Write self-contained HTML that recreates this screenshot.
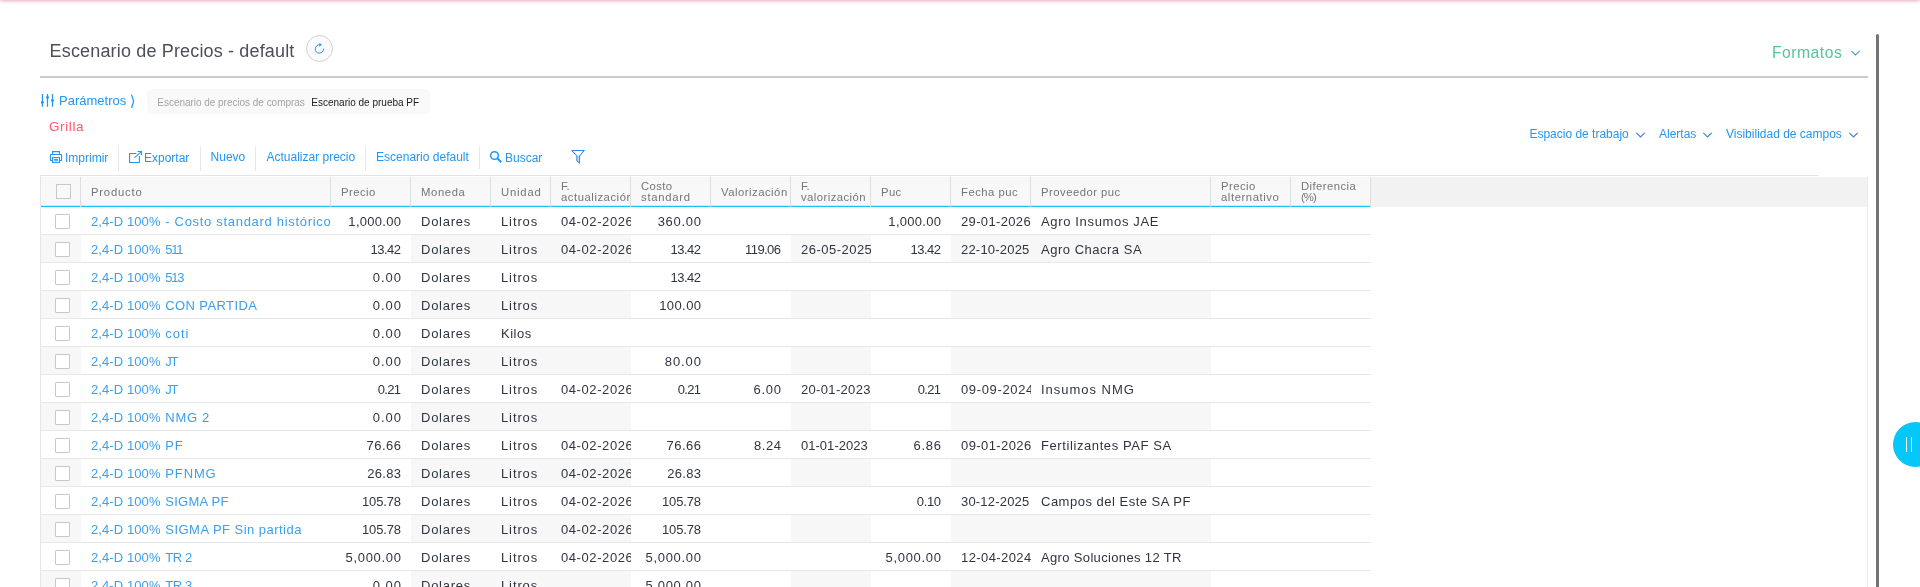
<!DOCTYPE html>
<html lang="es">
<head>
<meta charset="utf-8">
<title>Escenario de Precios - default</title>
<style>
html,body{margin:0;padding:0;background:#fff;}
body{width:1920px;height:587px;overflow:hidden;position:relative;font-family:"Liberation Sans",sans-serif;color:#333;}
#app{position:absolute;left:0;top:0;width:1920px;height:587px;overflow:hidden;will-change:transform;}
.abs{position:absolute;}
.topband{position:absolute;left:1px;top:-6px;width:1918px;height:5px;background:#fff;box-shadow:0 0 4px 1px rgba(205,50,100,.62);}
.title{position:absolute;left:49.6px;top:39px;font-family:"Liberation Sans",sans-serif;font-size:18px;line-height:24px;color:#4b5058;letter-spacing:.16px;white-space:nowrap;}
.rbtn{position:absolute;left:306px;top:35px;width:25px;height:25px;border:1px solid #cdd0d5;border-radius:50%;background:#fafafa;}
.hr{position:absolute;left:40px;top:76px;width:1828px;height:2px;background:#c9ccd1;}
.formatos{position:absolute;left:1772px;top:43px;font-size:15.7px;line-height:20px;color:#52c69a;letter-spacing:.5px;white-space:nowrap;}
.param{position:absolute;left:59px;top:93px;font-size:13px;line-height:15px;color:#2196f3;white-space:nowrap;}
.chip{position:absolute;left:147px;top:89px;width:283px;height:25px;border-radius:5px;background:#f9f9fa;}
.chip .l{position:absolute;left:10.3px;top:8px;letter-spacing:-.03px;font-size:10px;line-height:12px;color:#a3a3a3;white-space:nowrap;}
.chip .v{position:absolute;left:164.3px;top:8px;font-size:10px;line-height:12px;color:#1b1b1b;white-space:nowrap;}
.grilla{position:absolute;left:49px;top:119px;font-size:13.5px;line-height:16px;color:#f75c6c;letter-spacing:.6px;white-space:nowrap;}
.tb{position:absolute;font-size:12px;line-height:14px;color:#2196f3;white-space:nowrap;}
.sep{position:absolute;width:1px;background:#e8e8ea;top:146px;height:25px;}
.tline{position:absolute;left:40px;top:175px;width:1778px;height:1px;background:#e4e4e4;}
.rt{position:absolute;top:127px;font-size:12px;line-height:14px;color:#2196f3;white-space:nowrap;}
.vbar{position:absolute;left:1876px;top:34px;width:3px;height:560px;background:#727476;border-radius:2px 2px 0 0;}
.fab{position:absolute;left:1893px;top:422px;width:45px;height:45px;border-radius:50%;background:#06c8f8;}
.fab i{position:absolute;top:15px;width:1px;height:15px;background:#fff;}
/* grid */
.grid{position:absolute;left:0;top:0;width:1920px;height:587px;font-family:"Liberation Sans",sans-serif;}
.gl{position:absolute;left:40px;top:176px;width:1px;height:420px;background:#e6e6e6;}
.gr{position:absolute;left:1867px;top:176px;width:1px;height:420px;background:#ececec;}
.hrow{position:absolute;left:0;top:177px;width:1868px;height:30px;}
.hc{position:absolute;top:0;height:30px;background:linear-gradient(#f8f8f8 0,#f8f8f8 28px,transparent 28px);font-size:11.3px;color:#71767c;letter-spacing:.6px;overflow:hidden;white-space:nowrap;}
.hc::after{content:"";position:absolute;right:0;top:0;width:1px;height:30px;background:#dedee1;}
.hline{position:absolute;left:41px;top:28px;width:1330px;height:2px;background:linear-gradient(#c3eefc 0,#c3eefc 50%,#12c5f7 50%,#12c5f7 100%);}
.hc span{position:absolute;left:10px;top:9px;line-height:13px;}
.hc b{display:block;font-weight:normal;}
.hc.two span{top:4px;line-height:11px;}
.hfill{position:absolute;left:1371px;top:0;width:496px;height:30px;background:#f2f2f2;}
.cb{position:absolute;width:13px;height:13px;border:1px solid #c6c8cc;background:#fff;border-radius:1px;}
.hc .cb{background:#f9f9f9;border-radius:0;}
.hc .cb{top:7px;left:15px;}
.c .cb{top:7px;left:14px;}
.pf{display:inline-block;width:74.3px;white-space:pre;}
.row{position:absolute;left:0;width:1371px;height:28px;}
.row::after{content:"";position:absolute;left:41px;top:27px;width:1330px;height:1px;background:#e7e7e7;}
.c{position:absolute;top:0;height:27px;line-height:29px;font-size:13px;letter-spacing:.5px;color:#2f3540;padding:0 10px;box-sizing:border-box;overflow:hidden;white-space:nowrap;}
.c.sh{background:#f7f7f7;}
.c.num{text-align:right;padding-right:10px;}
.c.lk a{color:#3d9fe9;}
</style>
</head>
<body>
<div id="app">
<div class="topband"></div>
<div class="title">Escenario de Precios - default</div>
<div class="rbtn"></div>
<svg class="abs" style="left:313px;top:42px" width="13" height="13" viewBox="0 0 13 13"><path d="M10.7 7A4.2 4.2 0 1 1 6.5 2.7" fill="none" stroke="#2196f3" stroke-width="1" stroke-linecap="round"/><path d="M6.3 0.9L9.1 2.75L6.3 4.6Z" fill="#2196f3"/></svg>
<div class="formatos">Formatos</div>
<svg class="abs" style="left:1850px;top:49.4px" width="11" height="8" viewBox="0 0 11 8"><path d="M1.3 1.8L5.5 6L9.7 1.8" fill="none" stroke="#4f92e2" stroke-width="1.1"/></svg>
<div class="hr"></div>

<svg class="abs" style="left:40px;top:93px" width="15" height="15" viewBox="0 0 15 15"><g stroke="#2196f3" stroke-width="1.25" fill="none"><path d="M2.4 1.1V13.8M7.5 1.1V13.8M12.5 1.1V13.8"/></g><g fill="#2196f3"><circle cx="2.4" cy="9.5" r="1.45"/><circle cx="7.5" cy="4.4" r="1.45"/><circle cx="12.5" cy="7.4" r="1.45"/></g></svg>
<div class="param">Parámetros <span style="font-family:'DejaVu Sans',sans-serif;font-size:15px;line-height:10px;position:relative;top:1px">⟩</span></div>
<div class="chip"><span class="l">Escenario de precios de compras</span><span class="v">Escenario de prueba PF</span></div>
<div class="grilla">Grilla</div>

<div class="rt" style="left:1529.4px">Espacio de trabajo</div>
<svg class="abs" style="left:1635px;top:130.5px" width="11" height="8" viewBox="0 0 11 8"><path d="M1.3 1.8L5.5 6L9.7 1.8" fill="none" stroke="#3d84d4" stroke-width="1.15"/></svg>
<div class="rt" style="left:1659px">Alertas</div>
<svg class="abs" style="left:1702px;top:130.5px" width="11" height="8" viewBox="0 0 11 8"><path d="M1.3 1.8L5.5 6L9.7 1.8" fill="none" stroke="#3d84d4" stroke-width="1.15"/></svg>
<div class="rt" style="left:1726px">Visibilidad de campos</div>
<svg class="abs" style="left:1848px;top:130.5px" width="11" height="8" viewBox="0 0 11 8"><path d="M1.3 1.8L5.5 6L9.7 1.8" fill="none" stroke="#3d84d4" stroke-width="1.15"/></svg>

<!-- toolbar -->
<svg class="abs" style="left:49px;top:150px" width="14" height="14" viewBox="0 0 14 14"><g fill="none" stroke="#2196f3" stroke-width="1.1"><path d="M3.55 4.4V1.6H10.5V4.4"/><rect x="1.5" y="4.45" width="11.05" height="6" rx=".3"/><rect x="3.55" y="7.6" width="6.95" height="4.75" fill="#fff"/></g><rect x="5.1" y="9.1" width="3.9" height="1.7" rx=".3" fill="#2196f3"/></svg>
<div class="tb" style="left:65px;top:151px">Imprimir</div>
<div class="sep" style="left:118px"></div>
<svg class="abs" style="left:128px;top:150px" width="15" height="14" viewBox="0 0 15 14"><g fill="none" stroke="#2196f3" stroke-width="1.1"><path d="M8.3 3.5H1.6V12.5H11.4V6"/><path d="M6.5 7.7L13.2 1.8"/><path d="M9.5 1.55H13.45V5.1"/></g></svg>
<div class="tb" style="left:144px;top:151px">Exportar</div>
<div class="sep" style="left:200px"></div>
<div class="tb" style="left:210.6px;top:150px">Nuevo</div>
<div class="sep" style="left:255px"></div>
<div class="tb" style="left:266.5px;top:150px">Actualizar precio</div>
<div class="sep" style="left:365px"></div>
<div class="tb" style="left:376.1px;top:150px">Escenario default</div>
<div class="sep" style="left:479px;height:23px"></div>
<svg class="abs" style="left:489px;top:150px" width="14" height="14" viewBox="0 0 14 14"><g fill="none" stroke="#2196f3"><circle cx="5.5" cy="5.5" r="3.85" stroke-width="1.5"/><path d="M8.2 8.2L12.3 12.2" stroke-width="1.9"/></g></svg>
<div class="tb" style="left:505px;top:151px">Buscar</div>
<svg class="abs" style="left:570px;top:149px" width="16" height="16" viewBox="0 0 16 16"><path d="M1.6 1.5H14.4L9.6 6.9V14.2L6.8 11.8V6.9Z" fill="#b9d7f5" stroke="none"/><path d="M3.4 2.1H12.6L8.7 6.7L7.7 6.7Z" fill="#fff"/><path d="M1.6 1.5H14.4L9.6 6.9V14.2L6.8 11.8V6.9Z" fill="none" stroke="#3389e0" stroke-width="1" stroke-linejoin="miter"/></svg>
<div class="tline"></div>

<div class="grid">
<div class="hrow"><div class="hline"></div>
<div class="hc" style="left:41px;width:40px"><span class="cb"></span></div>
<div class="hc" style="left:81px;width:250px"><span><b style="letter-spacing:0.781px">Producto</b></span></div>
<div class="hc" style="left:331px;width:80px"><span><b style="letter-spacing:0.452px">Precio</b></span></div>
<div class="hc" style="left:411px;width:80px"><span><b style="letter-spacing:0.612px">Moneda</b></span></div>
<div class="hc" style="left:491px;width:60px"><span><b style="letter-spacing:0.797px">Unidad</b></span></div>
<div class="hc two" style="left:551px;width:80px"><span><b style="letter-spacing:-0.148px">F.</b><b style="letter-spacing:0.539px">actualización</b></span></div>
<div class="hc two" style="left:631px;width:80px"><span><b style="letter-spacing:0.393px">Costo</b><b style="letter-spacing:0.731px">standard</b></span></div>
<div class="hc" style="left:711px;width:80px"><span><b style="letter-spacing:0.499px">Valorización</b></span></div>
<div class="hc two" style="left:791px;width:80px"><span><b style="letter-spacing:-0.148px">F.</b><b style="letter-spacing:0.439px">valorización</b></span></div>
<div class="hc" style="left:871px;width:80px"><span><b style="letter-spacing:0.341px">Puc</b></span></div>
<div class="hc" style="left:951px;width:80px"><span><b style="letter-spacing:0.5px">Fecha puc</b></span></div>
<div class="hc" style="left:1031px;width:180px"><span><b style="letter-spacing:0.481px">Proveedor puc</b></span></div>
<div class="hc two" style="left:1211px;width:80px"><span><b style="letter-spacing:0.452px">Precio</b><b style="letter-spacing:0.576px">alternativo</b></span></div>
<div class="hc two" style="left:1291px;width:80px"><span><b style="letter-spacing:0.425px">Diferencia</b><b style="letter-spacing:-0.9px">(%)</b></span></div>
<div class="hfill"></div>
</div>
<div class="row" style="top:207px">
<div class="c" style="left:41px;width:40px"><span class="cb"></span></div>
<div class="c lk" style="left:81px;width:250px"><a><span class="pf" style="letter-spacing:0.09px">2,4-D 100% </span><span style="letter-spacing:0.692px">- Costo standard histórico</span></a></div>
<div class="c num" style="left:331px;width:80px"><span style="letter-spacing:0.289px;margin-right:-0.289px">1,000.00</span></div>
<div class="c" style="left:411px;width:80px"><span style="letter-spacing:0.751px">Dolares</span></div>
<div class="c" style="left:491px;width:60px"><span style="letter-spacing:0.882px">Litros</span></div>
<div class="c" style="left:551px;width:80px"><span style="letter-spacing:0.581px">04-02-2026</span></div>
<div class="c num" style="left:631px;width:80px"><span style="letter-spacing:0.714px;margin-right:-0.714px">360.00</span></div>
<div class="c" style="left:711px;width:80px"></div>
<div class="c" style="left:791px;width:80px"></div>
<div class="c num" style="left:871px;width:80px"><span style="letter-spacing:0.289px;margin-right:-0.289px">1,000.00</span></div>
<div class="c" style="left:951px;width:80px"><span style="letter-spacing:0.348px">29-01-2026</span></div>
<div class="c" style="left:1031px;width:180px"><span style="letter-spacing:0.654px">Agro Insumos JAE</span></div>
<div class="c" style="left:1211px;width:80px"></div>
<div class="c" style="left:1291px;width:80px"></div>
</div>
<div class="row even" style="top:235px">
<div class="c sh" style="left:41px;width:40px"><span class="cb"></span></div>
<div class="c lk" style="left:81px;width:250px"><a><span class="pf" style="letter-spacing:0.09px">2,4-D 100% </span><span style="letter-spacing:-1.3px">511</span></a></div>
<div class="c num" style="left:331px;width:80px"><span style="letter-spacing:-0.5px;margin-right:0.5px">13.42</span></div>
<div class="c sh" style="left:411px;width:80px"><span style="letter-spacing:0.751px">Dolares</span></div>
<div class="c sh" style="left:491px;width:60px"><span style="letter-spacing:0.882px">Litros</span></div>
<div class="c sh" style="left:551px;width:80px"><span style="letter-spacing:0.581px">04-02-2026</span></div>
<div class="c num" style="left:631px;width:80px"><span style="letter-spacing:-0.5px;margin-right:0.5px">13.42</span></div>
<div class="c num" style="left:711px;width:80px"><span style="letter-spacing:-0.573px;margin-right:0.573px">119.06</span></div>
<div class="c sh" style="left:791px;width:80px"><span style="letter-spacing:0.481px">26-05-2025</span></div>
<div class="c num" style="left:871px;width:80px"><span style="letter-spacing:-0.5px;margin-right:0.5px">13.42</span></div>
<div class="c sh" style="left:951px;width:80px"><span style="letter-spacing:0.204px">22-10-2025</span></div>
<div class="c sh" style="left:1031px;width:180px"><span style="letter-spacing:0.511px">Agro Chacra SA</span></div>
<div class="c" style="left:1211px;width:80px"></div>
<div class="c" style="left:1291px;width:80px"></div>
</div>
<div class="row" style="top:263px">
<div class="c" style="left:41px;width:40px"><span class="cb"></span></div>
<div class="c lk" style="left:81px;width:250px"><a><span class="pf" style="letter-spacing:0.09px">2,4-D 100% </span><span style="letter-spacing:-1.3px">513</span></a></div>
<div class="c num" style="left:331px;width:80px"><span style="letter-spacing:1.009px;margin-right:-1.009px">0.00</span></div>
<div class="c" style="left:411px;width:80px"><span style="letter-spacing:0.751px">Dolares</span></div>
<div class="c" style="left:491px;width:60px"><span style="letter-spacing:0.882px">Litros</span></div>
<div class="c" style="left:551px;width:80px"></div>
<div class="c num" style="left:631px;width:80px"><span style="letter-spacing:-0.5px;margin-right:0.5px">13.42</span></div>
<div class="c" style="left:711px;width:80px"></div>
<div class="c" style="left:791px;width:80px"></div>
<div class="c" style="left:871px;width:80px"></div>
<div class="c" style="left:951px;width:80px"></div>
<div class="c" style="left:1031px;width:180px"></div>
<div class="c" style="left:1211px;width:80px"></div>
<div class="c" style="left:1291px;width:80px"></div>
</div>
<div class="row even" style="top:291px">
<div class="c sh" style="left:41px;width:40px"><span class="cb"></span></div>
<div class="c lk" style="left:81px;width:250px"><a><span class="pf" style="letter-spacing:0.09px">2,4-D 100% </span><span style="letter-spacing:0.393px">CON PARTIDA</span></a></div>
<div class="c num" style="left:331px;width:80px"><span style="letter-spacing:1.009px;margin-right:-1.009px">0.00</span></div>
<div class="c sh" style="left:411px;width:80px"><span style="letter-spacing:0.751px">Dolares</span></div>
<div class="c sh" style="left:491px;width:60px"><span style="letter-spacing:0.882px">Litros</span></div>
<div class="c sh" style="left:551px;width:80px"></div>
<div class="c num" style="left:631px;width:80px"><span style="letter-spacing:0.394px;margin-right:-0.394px">100.00</span></div>
<div class="c" style="left:711px;width:80px"></div>
<div class="c sh" style="left:791px;width:80px"></div>
<div class="c" style="left:871px;width:80px"></div>
<div class="c sh" style="left:951px;width:80px"></div>
<div class="c sh" style="left:1031px;width:180px"></div>
<div class="c" style="left:1211px;width:80px"></div>
<div class="c" style="left:1291px;width:80px"></div>
</div>
<div class="row" style="top:319px">
<div class="c" style="left:41px;width:40px"><span class="cb"></span></div>
<div class="c lk" style="left:81px;width:250px"><a><span class="pf" style="letter-spacing:0.09px">2,4-D 100% </span><span style="letter-spacing:0.953px">coti</span></a></div>
<div class="c num" style="left:331px;width:80px"><span style="letter-spacing:1.009px;margin-right:-1.009px">0.00</span></div>
<div class="c" style="left:411px;width:80px"><span style="letter-spacing:0.751px">Dolares</span></div>
<div class="c" style="left:491px;width:60px"><span style="letter-spacing:0.506px">Kilos</span></div>
<div class="c" style="left:551px;width:80px"></div>
<div class="c" style="left:631px;width:80px"></div>
<div class="c" style="left:711px;width:80px"></div>
<div class="c" style="left:791px;width:80px"></div>
<div class="c" style="left:871px;width:80px"></div>
<div class="c" style="left:951px;width:80px"></div>
<div class="c" style="left:1031px;width:180px"></div>
<div class="c" style="left:1211px;width:80px"></div>
<div class="c" style="left:1291px;width:80px"></div>
</div>
<div class="row even" style="top:347px">
<div class="c sh" style="left:41px;width:40px"><span class="cb"></span></div>
<div class="c lk" style="left:81px;width:250px"><a><span class="pf" style="letter-spacing:0.09px">2,4-D 100% </span><span style="letter-spacing:-1.3px">JT</span></a></div>
<div class="c num" style="left:331px;width:80px"><span style="letter-spacing:1.009px;margin-right:-1.009px">0.00</span></div>
<div class="c sh" style="left:411px;width:80px"><span style="letter-spacing:0.751px">Dolares</span></div>
<div class="c sh" style="left:491px;width:60px"><span style="letter-spacing:0.882px">Litros</span></div>
<div class="c sh" style="left:551px;width:80px"></div>
<div class="c num" style="left:631px;width:80px"><span style="letter-spacing:0.925px;margin-right:-0.925px">80.00</span></div>
<div class="c" style="left:711px;width:80px"></div>
<div class="c sh" style="left:791px;width:80px"></div>
<div class="c" style="left:871px;width:80px"></div>
<div class="c sh" style="left:951px;width:80px"></div>
<div class="c sh" style="left:1031px;width:180px"></div>
<div class="c" style="left:1211px;width:80px"></div>
<div class="c" style="left:1291px;width:80px"></div>
</div>
<div class="row" style="top:375px">
<div class="c" style="left:41px;width:40px"><span class="cb"></span></div>
<div class="c lk" style="left:81px;width:250px"><a><span class="pf" style="letter-spacing:0.09px">2,4-D 100% </span><span style="letter-spacing:-1.3px">JT</span></a></div>
<div class="c num" style="left:331px;width:80px"><span style="letter-spacing:-0.657px;margin-right:0.657px">0.21</span></div>
<div class="c" style="left:411px;width:80px"><span style="letter-spacing:0.751px">Dolares</span></div>
<div class="c" style="left:491px;width:60px"><span style="letter-spacing:0.882px">Litros</span></div>
<div class="c" style="left:551px;width:80px"><span style="letter-spacing:0.581px">04-02-2026</span></div>
<div class="c num" style="left:631px;width:80px"><span style="letter-spacing:-0.657px;margin-right:0.657px">0.21</span></div>
<div class="c num" style="left:711px;width:80px"><span style="letter-spacing:0.709px;margin-right:-0.709px">6.00</span></div>
<div class="c" style="left:791px;width:80px"><span style="letter-spacing:0.326px">20-01-2023</span></div>
<div class="c num" style="left:871px;width:80px"><span style="letter-spacing:-0.657px;margin-right:0.657px">0.21</span></div>
<div class="c" style="left:951px;width:80px"><span style="letter-spacing:0.637px">09-09-2024</span></div>
<div class="c" style="left:1031px;width:180px"><span style="letter-spacing:0.984px">Insumos NMG</span></div>
<div class="c" style="left:1211px;width:80px"></div>
<div class="c" style="left:1291px;width:80px"></div>
</div>
<div class="row even" style="top:403px">
<div class="c sh" style="left:41px;width:40px"><span class="cb"></span></div>
<div class="c lk" style="left:81px;width:250px"><a><span class="pf" style="letter-spacing:0.09px">2,4-D 100% </span><span style="letter-spacing:0.715px">NMG 2</span></a></div>
<div class="c num" style="left:331px;width:80px"><span style="letter-spacing:1.009px;margin-right:-1.009px">0.00</span></div>
<div class="c sh" style="left:411px;width:80px"><span style="letter-spacing:0.751px">Dolares</span></div>
<div class="c sh" style="left:491px;width:60px"><span style="letter-spacing:0.882px">Litros</span></div>
<div class="c sh" style="left:551px;width:80px"></div>
<div class="c" style="left:631px;width:80px"></div>
<div class="c" style="left:711px;width:80px"></div>
<div class="c sh" style="left:791px;width:80px"></div>
<div class="c" style="left:871px;width:80px"></div>
<div class="c sh" style="left:951px;width:80px"></div>
<div class="c sh" style="left:1031px;width:180px"></div>
<div class="c" style="left:1211px;width:80px"></div>
<div class="c" style="left:1291px;width:80px"></div>
</div>
<div class="row" style="top:431px">
<div class="c" style="left:41px;width:40px"><span class="cb"></span></div>
<div class="c lk" style="left:81px;width:250px"><a><span class="pf" style="letter-spacing:0.09px">2,4-D 100% </span><span style="letter-spacing:0.729px">PF</span></a></div>
<div class="c num" style="left:331px;width:80px"><span style="letter-spacing:0.475px;margin-right:-0.475px">76.66</span></div>
<div class="c" style="left:411px;width:80px"><span style="letter-spacing:0.751px">Dolares</span></div>
<div class="c" style="left:491px;width:60px"><span style="letter-spacing:0.882px">Litros</span></div>
<div class="c" style="left:551px;width:80px"><span style="letter-spacing:0.581px">04-02-2026</span></div>
<div class="c num" style="left:631px;width:80px"><span style="letter-spacing:0.475px;margin-right:-0.475px">76.66</span></div>
<div class="c num" style="left:711px;width:80px"><span style="letter-spacing:0.543px;margin-right:-0.543px">8.24</span></div>
<div class="c" style="left:791px;width:80px"><span style="letter-spacing:0.026px">01-01-2023</span></div>
<div class="c num" style="left:871px;width:80px"><span style="letter-spacing:0.709px;margin-right:-0.709px">6.86</span></div>
<div class="c" style="left:951px;width:80px"><span style="letter-spacing:0.415px">09-01-2026</span></div>
<div class="c" style="left:1031px;width:180px"><span style="letter-spacing:0.59px">Fertilizantes PAF SA</span></div>
<div class="c" style="left:1211px;width:80px"></div>
<div class="c" style="left:1291px;width:80px"></div>
</div>
<div class="row even" style="top:459px">
<div class="c sh" style="left:41px;width:40px"><span class="cb"></span></div>
<div class="c lk" style="left:81px;width:250px"><a><span class="pf" style="letter-spacing:0.09px">2,4-D 100% </span><span style="letter-spacing:0.868px">PFNMG</span></a></div>
<div class="c num" style="left:331px;width:80px"><span style="letter-spacing:0.325px;margin-right:-0.325px">26.83</span></div>
<div class="c sh" style="left:411px;width:80px"><span style="letter-spacing:0.751px">Dolares</span></div>
<div class="c sh" style="left:491px;width:60px"><span style="letter-spacing:0.882px">Litros</span></div>
<div class="c sh" style="left:551px;width:80px"><span style="letter-spacing:0.581px">04-02-2026</span></div>
<div class="c num" style="left:631px;width:80px"><span style="letter-spacing:0.325px;margin-right:-0.325px">26.83</span></div>
<div class="c" style="left:711px;width:80px"></div>
<div class="c sh" style="left:791px;width:80px"></div>
<div class="c" style="left:871px;width:80px"></div>
<div class="c sh" style="left:951px;width:80px"></div>
<div class="c sh" style="left:1031px;width:180px"></div>
<div class="c" style="left:1211px;width:80px"></div>
<div class="c" style="left:1291px;width:80px"></div>
</div>
<div class="row" style="top:487px">
<div class="c" style="left:41px;width:40px"><span class="cb"></span></div>
<div class="c lk" style="left:81px;width:250px"><a><span class="pf" style="letter-spacing:0.09px">2,4-D 100% </span><span style="letter-spacing:0.232px">SIGMA PF</span></a></div>
<div class="c num" style="left:331px;width:80px"><span style="letter-spacing:-0.146px;margin-right:0.146px">105.78</span></div>
<div class="c" style="left:411px;width:80px"><span style="letter-spacing:0.751px">Dolares</span></div>
<div class="c" style="left:491px;width:60px"><span style="letter-spacing:0.882px">Litros</span></div>
<div class="c" style="left:551px;width:80px"><span style="letter-spacing:0.581px">04-02-2026</span></div>
<div class="c num" style="left:631px;width:80px"><span style="letter-spacing:-0.146px;margin-right:0.146px">105.78</span></div>
<div class="c" style="left:711px;width:80px"></div>
<div class="c" style="left:791px;width:80px"></div>
<div class="c num" style="left:871px;width:80px"><span style="letter-spacing:-0.357px;margin-right:0.357px">0.10</span></div>
<div class="c" style="left:951px;width:80px"><span style="letter-spacing:0.192px">30-12-2025</span></div>
<div class="c" style="left:1031px;width:180px"><span style="letter-spacing:0.499px">Campos del Este SA PF</span></div>
<div class="c" style="left:1211px;width:80px"></div>
<div class="c" style="left:1291px;width:80px"></div>
</div>
<div class="row even" style="top:515px">
<div class="c sh" style="left:41px;width:40px"><span class="cb"></span></div>
<div class="c lk" style="left:81px;width:250px"><a><span class="pf" style="letter-spacing:0.09px">2,4-D 100% </span><span style="letter-spacing:0.471px">SIGMA PF Sin partida</span></a></div>
<div class="c num" style="left:331px;width:80px"><span style="letter-spacing:-0.146px;margin-right:0.146px">105.78</span></div>
<div class="c sh" style="left:411px;width:80px"><span style="letter-spacing:0.751px">Dolares</span></div>
<div class="c sh" style="left:491px;width:60px"><span style="letter-spacing:0.882px">Litros</span></div>
<div class="c sh" style="left:551px;width:80px"><span style="letter-spacing:0.581px">04-02-2026</span></div>
<div class="c num" style="left:631px;width:80px"><span style="letter-spacing:-0.146px;margin-right:0.146px">105.78</span></div>
<div class="c" style="left:711px;width:80px"></div>
<div class="c sh" style="left:791px;width:80px"></div>
<div class="c" style="left:871px;width:80px"></div>
<div class="c sh" style="left:951px;width:80px"></div>
<div class="c sh" style="left:1031px;width:180px"></div>
<div class="c" style="left:1211px;width:80px"></div>
<div class="c" style="left:1291px;width:80px"></div>
</div>
<div class="row" style="top:543px">
<div class="c" style="left:41px;width:40px"><span class="cb"></span></div>
<div class="c lk" style="left:81px;width:250px"><a><span class="pf" style="letter-spacing:0.09px">2,4-D 100% </span><span style="letter-spacing:-0.414px">TR 2</span></a></div>
<div class="c num" style="left:331px;width:80px"><span style="letter-spacing:0.689px;margin-right:-0.689px">5,000.00</span></div>
<div class="c" style="left:411px;width:80px"><span style="letter-spacing:0.751px">Dolares</span></div>
<div class="c" style="left:491px;width:60px"><span style="letter-spacing:0.882px">Litros</span></div>
<div class="c" style="left:551px;width:80px"><span style="letter-spacing:0.581px">04-02-2026</span></div>
<div class="c num" style="left:631px;width:80px"><span style="letter-spacing:0.689px;margin-right:-0.689px">5,000.00</span></div>
<div class="c" style="left:711px;width:80px"></div>
<div class="c" style="left:791px;width:80px"></div>
<div class="c num" style="left:871px;width:80px"><span style="letter-spacing:0.689px;margin-right:-0.689px">5,000.00</span></div>
<div class="c" style="left:951px;width:80px"><span style="letter-spacing:0.404px">12-04-2024</span></div>
<div class="c" style="left:1031px;width:180px"><span style="letter-spacing:0.345px">Agro Soluciones 12 TR</span></div>
<div class="c" style="left:1211px;width:80px"></div>
<div class="c" style="left:1291px;width:80px"></div>
</div>
<div class="row even" style="top:571px">
<div class="c sh" style="left:41px;width:40px"><span class="cb"></span></div>
<div class="c lk" style="left:81px;width:250px"><a><span class="pf" style="letter-spacing:0.09px">2,4-D 100% </span><span style="letter-spacing:-0.414px">TR 3</span></a></div>
<div class="c num" style="left:331px;width:80px"><span style="letter-spacing:1.009px;margin-right:-1.009px">0.00</span></div>
<div class="c sh" style="left:411px;width:80px"><span style="letter-spacing:0.751px">Dolares</span></div>
<div class="c sh" style="left:491px;width:60px"><span style="letter-spacing:0.882px">Litros</span></div>
<div class="c sh" style="left:551px;width:80px"></div>
<div class="c num" style="left:631px;width:80px"><span style="letter-spacing:0.689px;margin-right:-0.689px">5,000.00</span></div>
<div class="c" style="left:711px;width:80px"></div>
<div class="c sh" style="left:791px;width:80px"></div>
<div class="c" style="left:871px;width:80px"></div>
<div class="c sh" style="left:951px;width:80px"></div>
<div class="c sh" style="left:1031px;width:180px"></div>
<div class="c" style="left:1211px;width:80px"></div>
<div class="c" style="left:1291px;width:80px"></div>
</div>
</div>
<div class="gl"></div><div class="gr"></div>
<div class="vbar"></div>
<div class="fab"><i style="left:13px"></i><i style="left:18px"></i></div>
</div>
</body>
</html>
